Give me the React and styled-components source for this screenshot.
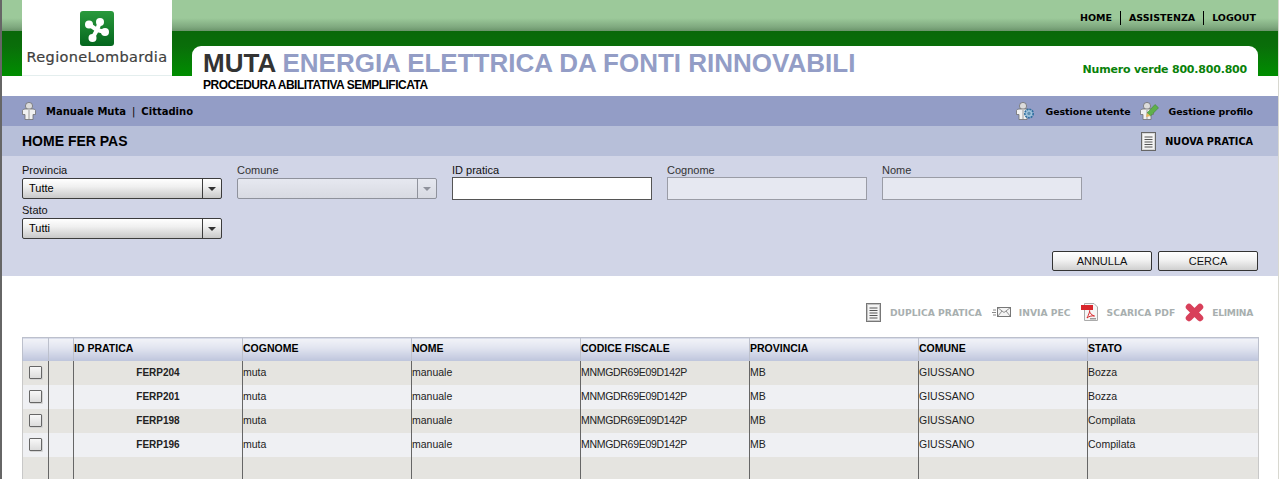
import React from "react";
import styled, { createGlobalStyle } from "styled-components";

const GlobalStyle = createGlobalStyle`
  html, body {
    margin: 0;
    height: 100%;
    overflow: hidden;
    background: #fff;
  }
  body {
    font-family: "Liberation Sans", Arial, sans-serif;
    font-size: 11px;
    color: #000;
  }
`;

const Page = styled.div`
  height: 100vh;
  overflow: hidden;
  border-left: 2px solid #666;
  border-right: 1px solid #d8d8d0;
  box-sizing: border-box;
`;

const Header = styled.header`
  display: flex;
  height: 96px;
  padding: 0 20px 0 20px;
  background:
    linear-gradient(#9cc99a 0, #9cc99a 18px, #7fa97f 27px, #6b946b 31px, #0a680a 31px, #0a6e0a 46px, #008e00 76px, transparent 76px);
`;

const LogoBox = styled.div`
  width: 150px;
  height: 76px;
  box-sizing: border-box;
  padding-top: 11px;
  background: #fff;
  border-bottom: 1px solid #e4eeee;
  display: flex;
  flex-direction: column;
  align-items: center;
`;

const LogoText = styled.div`
  margin-top: 3px;
  font-family: "DejaVu Sans", sans-serif;
  font-size: 14.5px;
  line-height: 17px;
  letter-spacing: 0.35px;
  color: #3f3f3f;
  -webkit-text-stroke: 0.2px #3f3f3f;
`;

const HeaderMain = styled.div`
  flex: 1;
  margin-left: 20px;
  display: flex;
  flex-direction: column;
`;

const TopNav = styled.nav`
  height: 46px;
  display: flex;
  justify-content: flex-end;
  padding: 11px 2px 0 0;
  box-sizing: border-box;
`;

const TopLink = styled.a`
  font-family: "DejaVu Sans", sans-serif;
  font-weight: bold;
  font-size: 9.5px;
  line-height: 14px;
  height: 14px;
  color: #000;
  & + & {
    margin-left: 8px;
    padding-left: 8px;
    border-left: 1px solid #000;
  }
`;

const TitlePanel = styled.div`
  height: 50px;
  background: #fff;
  border-radius: 9px 9px 0 0;
  display: flex;
  justify-content: space-between;
  padding: 0 11px;
`;

const Title = styled.h1`
  margin: 2px 0 0;
  font-size: 26px;
  line-height: 30px;
  font-weight: bold;
  color: #333;
  white-space: nowrap;
`;

const TitleTail = styled.span`
  color: #939dc6;
`;

const Subtitle = styled.div`
  font-size: 12px;
  line-height: 14px;
  font-weight: bold;
  letter-spacing: -0.5px;
`;

const Verde = styled.div`
  margin-top: 16px;
  font-family: "DejaVu Sans", sans-serif;
  font-size: 11px;
  line-height: 16px;
  font-weight: bold;
  letter-spacing: -0.2px;
  color: #0a820a;
`;

const UserBar = styled.div`
  height: 30px;
  background: #939dc6;
  display: flex;
  align-items: center;
  justify-content: space-between;
  padding: 0 25px 0 20px;
`;

const BarGroup = styled.div`
  display: flex;
  align-items: center;
`;

const BarLink = styled.a`
  display: flex;
  align-items: center;
  gap: ${(p) => p.$gap || 10}px;
  margin-left: ${(p) => p.$offset || 0}px;
  font-family: "DejaVu Sans", sans-serif;
  font-weight: bold;
  font-size: ${(p) => p.$size || 9.4}px;
  color: #000;
  white-space: nowrap;
`;

const BarText = styled.span`
  padding-top: 1px;
`;

const Sep = styled.span`
  margin: 0 6px;
  font-weight: normal;
`;

const TitleBar = styled.div`
  height: 30px;
  background: #b7bfd9;
  display: flex;
  align-items: center;
  justify-content: space-between;
  padding: 0 25px 0 20px;
`;

const PageTitle = styled.h2`
  margin: 0;
  font-size: 14px;
  font-weight: bold;
`;

const SearchForm = styled.form`
  height: 120px;
  box-sizing: border-box;
  background: #d1d5e7;
  padding: 7px 20px 5px 20px;
  display: flex;
  flex-direction: column;
  justify-content: space-between;
`;

const Fields = styled.div`
  display: flex;
  flex-wrap: wrap;
  column-gap: 15px;
  row-gap: 3px;
`;

const Field = styled.label`
  width: 200px;
  display: block;
`;

const FieldLabel = styled.div`
  line-height: 15px;
  height: 15px;
  color: ${(p) => (p.$off ? "#333" : "#111")};
`;

const Select = styled.div`
  height: 21px;
  box-sizing: border-box;
  display: flex;
  border: 1px solid ${(p) => (p.$off ? "#8f929c" : "#3c3c3c")};
  border-radius: 2px;
  background: ${(p) =>
    p.$off
      ? "linear-gradient(#e6e8f0, #d8dae2)"
      : "linear-gradient(#fff, #f0f0f0 40%, #c8c8c8)"};
`;

const SelectValue = styled.div`
  flex: 1;
  padding-left: 6px;
  line-height: 19px;
`;

const SelectArrow = styled.div`
  width: 18px;
  border-left: 1px solid ${(p) => (p.$off ? "#8f929c" : "#3c3c3c")};
  display: flex;
  align-items: center;
  justify-content: center;
  &::after {
    content: "";
    border-left: 4px solid transparent;
    border-right: 4px solid transparent;
    border-top: 4px solid ${(p) => (p.$off ? "#8f929c" : "#333")};
  }
`;

const TextInput = styled.input`
  display: block;
  width: 100%;
  height: 23px;
  margin-top: -1px;
  box-sizing: border-box;
  padding: 0 4px;
  border: 1px solid ${(p) => (p.disabled ? "#9a9ca6" : "#555")};
  background: ${(p) => (p.disabled ? "#e6e8f1" : "#fff")};
  outline: none;
  border-radius: 0;
`;

const FormButtons = styled.div`
  display: flex;
  justify-content: flex-end;
  gap: 6px;
`;

const Button = styled.button`
  width: 100px;
  height: 20px;
  padding: 0;
  border: 1px solid #333;
  border-radius: 2px;
  background: linear-gradient(#fff, #f2f2f2 45%, #cfcfcf);
  font-family: inherit;
  font-size: 11px;
  color: #111;
`;

const ActionBar = styled.div`
  display: flex;
  justify-content: flex-end;
  align-items: center;
  height: 61px;
  box-sizing: border-box;
  padding: 11px 25px 0 0;
`;

const Action = styled.a`
  display: flex;
  align-items: center;
  gap: ${(p) => p.$gap || 8}px;
  margin-left: 10px;
  font-family: "DejaVu Sans", sans-serif;
  font-weight: bold;
  font-size: 9.2px;
  letter-spacing: ${(p) => (p.$tight ? "-0.3px" : "0")};
  color: #a8afaf;
  white-space: nowrap;
`;

const TableWrap = styled.div`
  margin: 0 20px;
`;

const Table = styled.table`
  width: 100%;
  table-layout: fixed;
  border-collapse: collapse;
`;

const HeadCell = styled.th`
  height: 23px;
  box-sizing: border-box;
  padding: 0 0 3px 0;
  text-align: left;
  font-size: 10.5px;
  font-weight: bold;
  border: 1px solid #bcc0cc;
  border-bottom: 0;
  background: linear-gradient(#f2f3f8, #e2e5f0 40%, #bdc4dc);
`;

const Row = styled.tr`
  background: ${(p) => (p.$odd ? "#e5e4e0" : "#eff0f3")};
`;

const Cell = styled.td`
  height: 24px;
  box-sizing: border-box;
  padding: 0 0 ${(p) => (p.$id ? 0 : 2)}px 0;
  font-size: ${(p) => (p.$id ? 10 : 10.5)}px;
  letter-spacing: ${(p) => (p.$tight ? "-0.3px" : "0")};
  color: #222;
  border-left: 1px solid ${(p) => (p.$edge ? "#c8c8c8" : "#666")};
  border-right: ${(p) => (p.$last ? "1px solid #c8c8c8" : "0")};
  text-align: ${(p) => (p.$id ? "center" : "left")};
  font-weight: ${(p) => (p.$id ? "bold" : "normal")};
`;

const Check = styled.span`
  display: block;
  width: 13px;
  height: 13px;
  margin: 2px 0 0 6px;
  box-sizing: border-box;
  border: 1px solid #666;
  border-radius: 1px;
  background: linear-gradient(#f8f8f8, #dcdcdc);
  box-shadow: 1px 1px 0 #d4d4d4;
`;

const UserShape = () => (
  <>
    <circle cx="7" cy="4" r="3.6" fill="#dcdcdc" stroke="#707070" strokeWidth="0.8" />
    <path
      d="M0.5 8.5 Q1 7 3 7 H11 Q13 7 13.5 8.5 V12.5 H11 V17.5 H3 V12.5 H0.5 Z"
      fill="#f1f1f1"
      stroke="#707070"
      strokeWidth="0.8"
    />
    <path d="M7 8 V17" stroke="#b4b4b4" strokeWidth="1.4" />
  </>
);

const UserIcon = () => (
  <svg width="14" height="18" viewBox="0 0 14 18">
    <UserShape />
  </svg>
);

const UserGearIcon = () => (
  <svg width="19" height="18" viewBox="0 0 19 18">
    <UserShape />
    <circle cx="13" cy="11.5" r="4.2" fill="#9fc3dc" stroke="#2f6f9f" strokeWidth="1.6" strokeDasharray="2 0.8" />
    <circle cx="13" cy="11.5" r="1.7" fill="#5f8fb0" />
  </svg>
);

const UserPenIcon = () => (
  <svg width="19" height="18" viewBox="0 0 19 18">
    <UserShape />
    <path d="M7 11 L15 2.5 L18.5 5.8 L10.5 14 Z" fill="#5fb04a" stroke="#3f8a34" strokeWidth="0.6" />
    <path d="M7 11 L10.5 14 L6 15 Z" fill="#e8b25a" />
  </svg>
);

const DocIcon = ({ dim }) => (
  <svg width="15" height="19" viewBox="0 0 15 19">
    <rect x="0.5" y="0.5" width="14" height="18" fill={dim ? "#c4c4c4" : "#d8d8d8"} stroke={dim ? "#777" : "#666"} />
    <rect x="2" y="2" width="11" height="15" fill="#f4f4f4" />
    <path d="M3.5 5 H11.5 M3.5 7.5 H11.5 M3.5 10 H11.5 M3.5 12.5 H11.5 M3.5 15 H11.5" stroke="#555" strokeWidth="1" />
  </svg>
);

const MailIcon = () => (
  <svg width="19" height="12" viewBox="0 0 19 12">
    <rect x="5.5" y="1.5" width="13" height="9" fill="#f4f4f4" stroke="#777" />
    <path d="M5.5 1.5 L12 6.5 L18.5 1.5 M5.5 10.5 L10 5 M18.5 10.5 L14 5" fill="none" stroke="#777" strokeWidth="0.8" />
    <path d="M1 4 H4 M0 6.5 H4 M1 9 H4" stroke="#888" strokeWidth="1" />
  </svg>
);

const PdfIcon = () => (
  <svg width="18" height="18" viewBox="0 0 18 18">
    <path d="M3.5 0.5 H13 L16.5 4 V17.5 H3.5 Z" fill="#f6f6f6" stroke="#aaa" />
    <rect x="0" y="2" width="12" height="5" fill="#d8262c" />
    <path d="M6 15 C8 11 9 8 8.6 7.5 C8 8 9.5 12 13.5 13 C10.5 12.4 7.5 13.6 6 15 Z" fill="none" stroke="#d8262c" strokeWidth="1" />
    <rect x="9" y="15" width="6" height="1.5" fill="#999" />
  </svg>
);

const CrossIcon = () => (
  <svg width="19" height="19" viewBox="0 0 19 19">
    <path d="M4 4 L15 15 M15 4 L4 15" stroke="#d8405a" strokeWidth="6.5" strokeLinecap="round" />
  </svg>
);

const LogoMark = () => (
  <svg width="34" height="35" viewBox="0 0 34 35">
    <defs>
      <linearGradient id="logoGreen" x1="0" y1="0" x2="0" y2="1">
        <stop offset="0" stopColor="#2a9a3c" />
        <stop offset="1" stopColor="#04661e" />
      </linearGradient>
    </defs>
    <rect width="34" height="35" rx="3" fill="url(#logoGreen)" />
    <g stroke="#fff" strokeWidth="4.2" strokeLinecap="round" fill="#fff">
      <path d="M17 19 L9 13.5 M17 19 L20 11 M17 19 L25 21 M17 19 L12.5 27" />
    </g>
    <g fill="#fff">
      <circle cx="9" cy="13.5" r="4" />
      <circle cx="20" cy="11" r="4" />
      <circle cx="25" cy="21" r="4" />
      <circle cx="12.5" cy="27" r="4" />
    </g>
  </svg>
);

const columns = ["ID PRATICA", "COGNOME", "NOME", "CODICE FISCALE", "PROVINCIA", "COMUNE", "STATO"];
const widths = [26, 25, 169, 169, 169, 169, 169, 169, 171];

const practices = [
  ["FERP204", "Bozza"],
  ["FERP201", "Bozza"],
  ["FERP198", "Compilata"],
  ["FERP196", "Compilata"],
];

const App = () => {
  return (
    <Page>
      <GlobalStyle />
      <Header>
        <LogoBox>
          <LogoMark />
          <LogoText>RegioneLombardia</LogoText>
        </LogoBox>
        <HeaderMain>
          <TopNav>
            <TopLink>HOME</TopLink>
            <TopLink>ASSISTENZA</TopLink>
            <TopLink>LOGOUT</TopLink>
          </TopNav>
          <TitlePanel>
            <div>
              <Title>
                MUTA <TitleTail>ENERGIA ELETTRICA DA FONTI RINNOVABILI</TitleTail>
              </Title>
              <Subtitle>PROCEDURA ABILITATIVA SEMPLIFICATA</Subtitle>
            </div>
            <Verde>Numero verde 800.800.800</Verde>
          </TitlePanel>
        </HeaderMain>
      </Header>

      <UserBar>
        <BarGroup>
          <BarLink $size={10}>
            <UserIcon />
            <BarText>
              Manuale Muta<Sep>|</Sep>Cittadino
            </BarText>
          </BarLink>
        </BarGroup>
        <BarGroup>
          <BarLink>
            <UserGearIcon />
            <BarText>Gestione utente</BarText>
          </BarLink>
          <BarLink $offset={9}>
            <UserPenIcon />
            <BarText>Gestione profilo</BarText>
          </BarLink>
        </BarGroup>
      </UserBar>

      <TitleBar>
        <PageTitle>HOME FER PAS</PageTitle>
        <BarLink $gap={9} $size={9.7}>
          <DocIcon />
          NUOVA PRATICA
        </BarLink>
      </TitleBar>

      <SearchForm>
        <Fields>
          <Field>
            <FieldLabel>Provincia</FieldLabel>
            <Select>
              <SelectValue>Tutte</SelectValue>
              <SelectArrow />
            </Select>
          </Field>
          <Field>
            <FieldLabel $off>Comune</FieldLabel>
            <Select $off>
              <SelectValue />
              <SelectArrow $off />
            </Select>
          </Field>
          <Field>
            <FieldLabel>ID pratica</FieldLabel>
            <TextInput />
          </Field>
          <Field>
            <FieldLabel $off>Cognome</FieldLabel>
            <TextInput disabled />
          </Field>
          <Field>
            <FieldLabel $off>Nome</FieldLabel>
            <TextInput disabled />
          </Field>
          <Field>
            <FieldLabel>Stato</FieldLabel>
            <Select>
              <SelectValue>Tutti</SelectValue>
              <SelectArrow />
            </Select>
          </Field>
        </Fields>
        <FormButtons>
          <Button type="button">ANNULLA</Button>
          <Button type="button">CERCA</Button>
        </FormButtons>
      </SearchForm>

      <ActionBar>
        <Action $gap={9}>
          <DocIcon dim />
          DUPLICA PRATICA
        </Action>
        <Action>
          <MailIcon />
          INVIA PEC
        </Action>
        <Action>
          <PdfIcon />
          SCARICA PDF
        </Action>
        <Action $tight>
          <CrossIcon />
          ELIMINA
        </Action>
      </ActionBar>

      <TableWrap>
        <Table>
          <colgroup>
            {widths.map((w, i) => (
              <col key={i} width={w} />
            ))}
          </colgroup>
          <thead>
            <tr>
              <HeadCell />
              <HeadCell />
              {columns.map((c) => (
                <HeadCell key={c}>{c}</HeadCell>
              ))}
            </tr>
          </thead>
          <tbody>
            {practices.map(([id, state], i) => (
              <Row key={id} $odd={i % 2 === 0}>
                <Cell $edge>
                  <Check />
                </Cell>
                <Cell />
                <Cell $id>{id}</Cell>
                <Cell>muta</Cell>
                <Cell>manuale</Cell>
                <Cell $tight>MNMGDR69E09D142P</Cell>
                <Cell>MB</Cell>
                <Cell>GIUSSANO</Cell>
                <Cell $last>{state}</Cell>
              </Row>
            ))}
            <Row $odd>
              <Cell $edge />
              <Cell />
              <Cell />
              <Cell />
              <Cell />
              <Cell />
              <Cell />
              <Cell />
              <Cell $last />
            </Row>
          </tbody>
        </Table>
      </TableWrap>
    </Page>
  );
};

export default App;
